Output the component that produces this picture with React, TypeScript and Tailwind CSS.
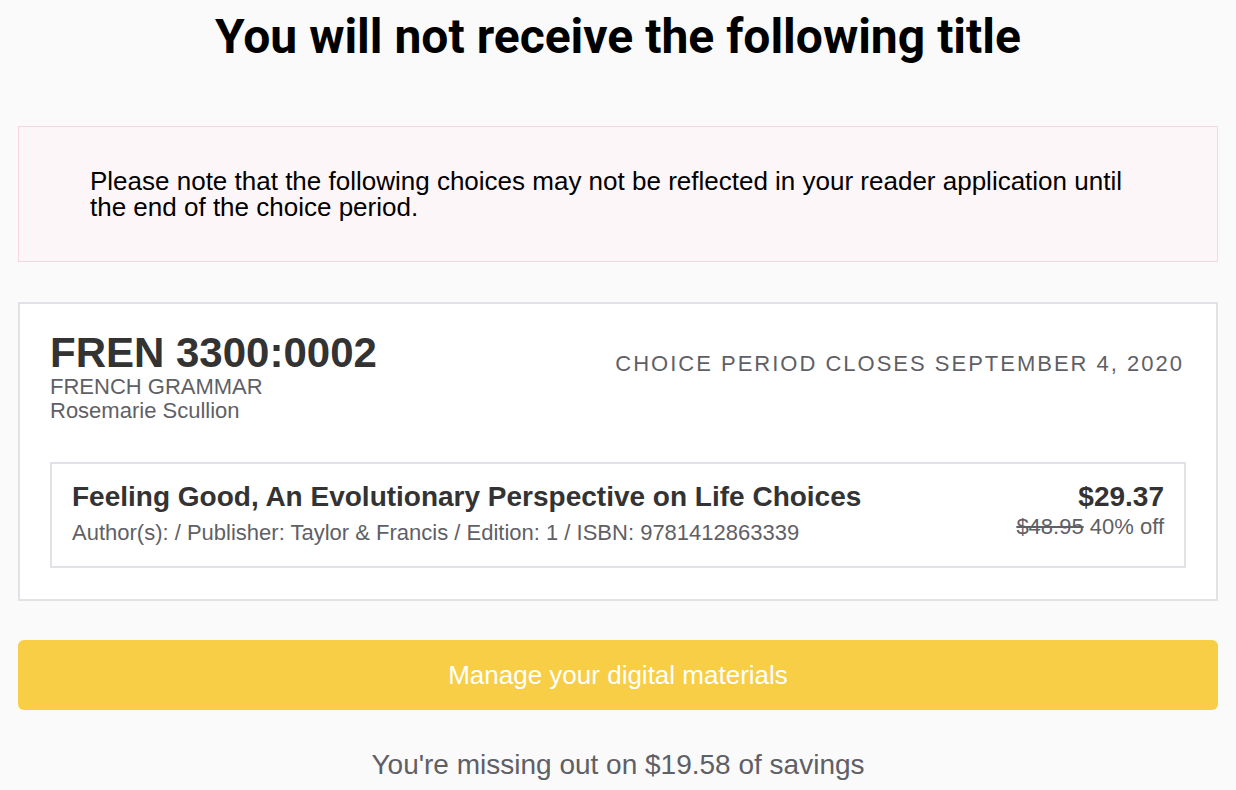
export default function App() {
  return (
    <div className="min-h-screen bg-[#fafafa] font-['Liberation_Sans',Arial,sans-serif] text-[#333]">
      <div className="mx-auto w-[1200px] pb-10">
        <h1 className="pt-[9px] text-center font-['Roboto',sans-serif] text-[48px] leading-[56px] font-bold text-black">
          You will not receive the following title
        </h1>

        <div className="mt-[61px] border border-[#f7d6df] bg-[#fdf6f8] py-[41px] pl-[71px]">
          <p className="w-[1050px] text-[26px] leading-[26px] text-black">
            Please note that the following choices may not be reflected in your reader application until the end of the
            choice period.
          </p>
        </div>

        <div className="mt-[40px] border-2 border-[#e2e2e6] bg-white px-[30px] pt-[27px] pb-[31px]">
          <div className="flex items-start justify-between">
            <div>
              <div className="text-[42px] leading-[44px] font-bold text-[#333]">FREN 3300:0002</div>
              <div className="text-[22px] leading-[24px] text-[#5f5f66]">FRENCH GRAMMAR</div>
              <div className="text-[22px] leading-[24px] text-[#5f5f66]">Rosemarie Scullion</div>
            </div>
            <div className="mt-[19px] mr-[2px] text-[22px] leading-[28px] tracking-[2px] text-[#5f5f66]">
              CHOICE PERIOD CLOSES SEPTEMBER 4, 2020
            </div>
          </div>

          <div className="mt-[39px] flex items-start justify-between border-2 border-[#e2e2e6] px-[20px] pt-[17px] pb-[20px]">
            <div>
              <div className="text-[28px] leading-[32px] font-bold text-[#333]">
                Feeling Good, An Evolutionary Perspective on Life Choices
              </div>
              <div className="mt-[7px] text-[22px] leading-[26px] text-[#5f5f66]">
                Author(s): / Publisher: Taylor &amp; Francis / Edition: 1 / ISBN: 9781412863339
              </div>
            </div>
            <div className="text-right">
              <div className="text-[28px] leading-[32px] font-bold text-[#333]">$29.37</div>
              <div className="mt-[2px] text-[22px] leading-[24px] text-[#5f5f66]">
                <span className="line-through">$48.95</span> 40% off
              </div>
            </div>
          </div>
        </div>

        <button
          type="button"
          className="mt-[39px] flex h-[70px] w-full items-center justify-center rounded-[6px] bg-[#f7ce46] text-[26px] text-white"
        >
          Manage your digital materials
        </button>

        <p className="mt-[39px] text-center text-[28px] leading-[32px] text-[#5f5f66]">
          You're missing out on $19.58 of savings
        </p>
      </div>
    </div>
  )
}
